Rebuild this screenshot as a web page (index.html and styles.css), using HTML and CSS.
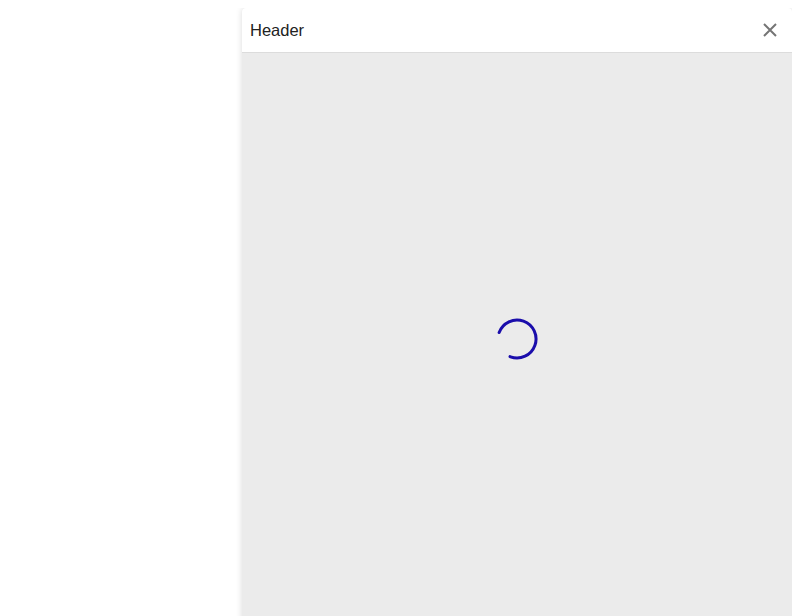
FILE: index.html
```html
<!DOCTYPE html>
<html>
<head>
<meta charset="utf-8">
<link rel="stylesheet" href="styles.css">
</head>
<body>
<div class="layout">
  <aside class="panel">
    <div class="panel-header">
      <span class="panel-title">Header</span>
      <button class="close-btn" aria-label="Close">
        <svg width="14" height="14" viewBox="0 0 14 14"><path d="M1 1 L13 13 M13 1 L1 13" stroke="#757575" stroke-width="2" fill="none"/></svg>
      </button>
    </div>
    <div class="panel-body">
      <svg class="spinner" width="44" height="44" viewBox="0 0 44 44">
        <circle cx="22" cy="22" r="19" fill="none" stroke="#1a0dab" stroke-width="3" stroke-linecap="round" stroke-dasharray="89.5 120" transform="rotate(200 22 22)"/>
      </svg>
    </div>
  </aside>
</div>
</body>
</html>
```
FILE: styles.css
```css
html { overflow: hidden; }
body {
  margin: 8px 8px 0;
  font-family: "Liberation Sans", Arial, sans-serif;
  background: #fff;
}
.layout {
  display: flex;
  justify-content: flex-end;
}
.panel {
  width: 550px;
  height: 100vh;
  display: flex;
  flex-direction: column;
  border-radius: 4px 4px 0 0;
  box-shadow: 0 0 6px rgba(0,0,0,0.15);
  background: #ebebeb;
  overflow: hidden;
}
.panel-header {
  height: 45px;
  flex: none;
  display: flex;
  align-items: center;
  justify-content: space-between;
  padding: 0 8px;
  background: #fff;
  border-bottom: 1px solid #dcdcdc;
  box-sizing: border-box;
}
.panel-title {
  font-size: 16.5px;
  color: #222;
}
.close-btn {
  border: 0;
  background: none;
  padding: 0;
  margin-right: 7px;
  width: 14px;
  height: 14px;
  display: flex;
}
.panel-body {
  flex: 1;
  display: flex;
  align-items: center;
  justify-content: center;
}
.spinner { display: block; }
```
